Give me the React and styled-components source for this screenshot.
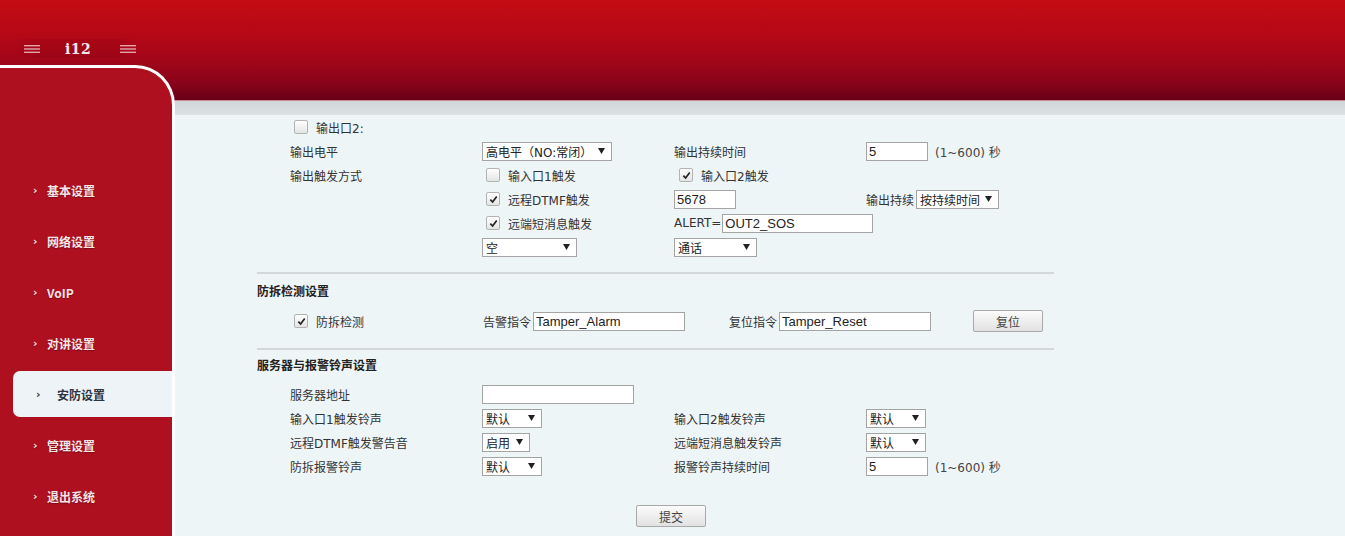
import styled, { createGlobalStyle } from 'styled-components'

const GlobalStyle = createGlobalStyle`
    html, body {
        margin: 0;
        padding: 0;
        height: 100%;
        overflow: hidden;
    }
    body {
        font-family: "DejaVu Sans", "Noto Sans CJK SC", sans-serif;
        font-size: 12px;
        color: #333;
        background: #eef5f7;
    }
`

const Page = styled.div`
    display: flex;
    flex-direction: column;
    height: 536px;
    overflow: hidden;
    background: #eef5f7;
`
const Header = styled.header`
    flex-shrink: 0;
    height: 101px;
    background: linear-gradient(#c40c13 0%, #b50817 35%, #a2061a 60%, #8a0419 82%, #680016 100%);
    border-bottom: 1px solid #c98a94;
    box-sizing: border-box;
`
const Brand = styled.div`
    display: flex;
    align-items: center;
    width: 125px;
    height: 19px;
    margin: 39px 0 0 12px;
    padding-left: 12px;
    box-sizing: border-box;
    background: linear-gradient(90deg, rgba(120, 0, 10, 0) 0%, rgba(120, 0, 10, 0.16) 15%, rgba(120, 0, 10, 0.16) 85%, rgba(120, 0, 10, 0) 100%);
`
const BrandName = styled.span`
    margin: 0 29px 0 25px;
    font-family: "DejaVu Serif", "Liberation Serif", serif;
    font-weight: bold;
    font-size: 14px;
    color: #f4e6e8;
    letter-spacing: 0.5px;
`
const Shade = styled.div`
    flex-shrink: 0;
    height: 14px;
    background: linear-gradient(#d0d6d7, #dce2e3);
`
const Body = styled.div`
    display: flex;
    flex: 1;
    min-height: 0;
`
const Sidebar = styled.nav`
    position: relative;
    z-index: 1;
    flex-shrink: 0;
    width: 172px;
    margin-top: -50px;
    margin-bottom: -100px;
    padding-top: 97px;
    background: #ae1020;
    border-top: 3px solid #fff;
    border-right: 3px solid #fff;
    border-top-right-radius: 40px;
`
const MenuItem = styled.div`
    display: flex;
    align-items: center;
    height: 51px;
    padding: ${({ $active }) => ($active ? '2px 0 3px 13px' : '0')};
    box-sizing: border-box;
`
const MenuInner = styled.div`
    display: flex;
    align-items: center;
    flex: 1;
    height: 100%;
    padding-left: ${({ $active }) => ($active ? '23px' : '33px')};
    background: ${({ $active }) => ($active ? '#eef3f8' : 'transparent')};
    border-radius: 7px 0 0 7px;
    color: ${({ $active }) => ($active ? '#2c3440' : '#f6e4e7')};
    font-family: "Noto Sans CJK SC", sans-serif;
    font-weight: bold;
    font-size: 12px;
    text-shadow: ${({ $active }) => ($active ? 'none' : '0 1px 1px rgba(80,0,10,0.5)')};
`
const Chevron = styled.span`
    width: ${({ $active }) => ($active ? '21px' : '14px')};
    font-size: 11px;
    font-family: "DejaVu Sans", sans-serif;
`
const Main = styled.main`
    flex: 1;
    padding-left: 82px;
`
const Panel = styled.div`
    width: 797px;
`
const Grid = styled.div`
    display: grid;
    grid-template-columns: ${({ $cols }) => $cols || '192px 192px 192px 192px'};
    grid-auto-rows: ${({ $row }) => $row || 24}px;
    align-items: center;
    padding-left: 33px;
`
const Cell = styled.div`
    display: flex;
    align-items: center;
    gap: ${({ $gap }) => ($gap === undefined ? 2 : $gap)}px;
    grid-column: ${({ $col, $span }) => ($col ? `${$col} / span ${$span || 1}` : 'auto')};
    padding-left: ${({ $pad }) => $pad || 0}px;
    white-space: nowrap;
`
const Rule = styled.hr`
    height: 2px;
    margin: ${({ $top }) => $top}px 0 0;
    border: none;
    background: #d3d8da;
`
const SectionTitle = styled.div`
    height: 20px;
    line-height: 20px;
    margin: ${({ $top }) => $top}px 0 ${({ $bottom }) => $bottom}px;
    font-weight: 600;
    color: #222;
`
const Box = styled.span`
    display: inline-flex;
    align-items: center;
    justify-content: center;
    width: 12px;
    height: 12px;
    margin-right: 8px;
    border: 1px solid #b3b3b3;
    border-radius: 2px;
    background: linear-gradient(#ffffff, #e4e4e4);
`
const SelectBox = styled.div`
    display: inline-flex;
    align-items: center;
    justify-content: space-between;
    width: ${({ $w }) => $w}px;
    height: 19px;
    padding: 0 6px 0 3px;
    box-sizing: border-box;
    border: 1px solid #a4a4a4;
    background: #fff;
    color: #222;
    font-size: 12px;
`
const TextInput = styled.input`
    width: ${({ $w }) => $w}px;
    height: 19px;
    padding: 0 2px;
    box-sizing: border-box;
    border: 1px solid #a4a4a4;
    background: #fff;
    color: #222;
    font-family: "Liberation Sans", "Noto Sans CJK SC", sans-serif;
    font-size: 13px;
    outline: none;
`
const Button = styled.button`
    width: 70px;
    height: 22px;
    padding: 0;
    border: 1px solid #a9a9a9;
    border-radius: 2px;
    background: linear-gradient(#fbfbfb, #e2e2e2);
    color: #444;
    font-family: "Noto Sans CJK SC", sans-serif;
    font-size: 12px;
`
const Range = styled.span`
    margin-left: 5px;
    color: #444;
`
const SubmitRow = styled.div`
    display: flex;
    justify-content: center;
    width: 768px;
    margin: 27px 0 0 30px;
`

const Burger = () => (
    <svg width="16" height="8" viewBox="0 0 16 8">
        <rect x="0" y="0" width="16" height="1.4" fill="#e7a4ac" />
        <rect x="0" y="3.3" width="16" height="1.4" fill="#e7a4ac" />
        <rect x="0" y="6.6" width="16" height="1.4" fill="#e7a4ac" />
    </svg>
)

const Check = ({ checked, children }) => (
    <>
        <Box>
            {checked && (
                <svg width="9" height="9" viewBox="0 0 10 10">
                    <path d="M1.5 5.2 L4 7.8 L8.6 1.6" fill="none" stroke="#222" strokeWidth="1.9" />
                </svg>
            )}
        </Box>
        {children}
    </>
)

const Select = ({ w, children }) => (
    <SelectBox $w={w}>
        <span>{children}</span>
        <svg width="7" height="6" viewBox="0 0 7 6">
            <polygon points="0,0 7,0 3.5,6" fill="#222" />
        </svg>
    </SelectBox>
)

const menu = ['基本设置', '网络设置', 'VoIP', '对讲设置', '安防设置', '管理设置', '退出系统']

const App = () => (
    <Page>
        <GlobalStyle />
        <Header>
            <Brand>
                <Burger />
                <BrandName>i12</BrandName>
                <Burger />
            </Brand>
        </Header>
        <Shade />
        <Body>
            <Sidebar>
                {menu.map((m) => {
                    const active = m === '安防设置'
                    return (
                        <MenuItem key={m} $active={active}>
                            <MenuInner $active={active}>
                                <Chevron $active={active}>›</Chevron>
                                {m}
                            </MenuInner>
                        </MenuItem>
                    )
                })}
            </Sidebar>
            <Main>
                <Panel>
                    <Grid>
                        <Cell $col={1} $span={2} $pad={4} $gap={0}>
                            <Check>输出口2:</Check>
                        </Cell>
                        <Cell $col={1}>输出电平</Cell>
                        <Cell><Select w={130}>高电平（NO:常闭）</Select></Cell>
                        <Cell>输出持续时间</Cell>
                        <Cell><TextInput $w={62} defaultValue="5" /><Range>(1~600) 秒</Range></Cell>
                        <Cell $col={1}>输出触发方式</Cell>
                        <Cell $pad={4} $gap={0}><Check>输入口1触发</Check></Cell>
                        <Cell $pad={5} $gap={0}><Check checked>输入口2触发</Check></Cell>
                        <Cell $col={2} $pad={4} $gap={0}><Check checked>远程DTMF触发</Check></Cell>
                        <Cell><TextInput $w={62} defaultValue="5678" /></Cell>
                        <Cell>输出持续<Select w={83}>按持续时间</Select></Cell>
                        <Cell $col={2} $pad={4} $gap={0}><Check checked>远端短消息触发</Check></Cell>
                        <Cell $span={2} $col={3} $gap={1}>ALERT=<TextInput $w={151} defaultValue="OUT2_SOS" /></Cell>
                        <Cell $col={2}><Select w={95}>空</Select></Cell>
                        <Cell><Select w={83}>通话</Select></Cell>
                    </Grid>

                    <Rule $top={13} />
                    <SectionTitle $top={8} $bottom={5}>防拆检测设置</SectionTitle>
                    <Grid $cols="192px 247px 244px auto" $row={28}>
                        <Cell $pad={4} $gap={0}><Check checked>防拆检测</Check></Cell>
                        <Cell $pad={1}>告警指令<TextInput $w={152} defaultValue="Tamper_Alarm" /></Cell>
                        <Cell>复位指令<TextInput $w={152} defaultValue="Tamper_Reset" /></Cell>
                        <Cell><Button>复位</Button></Cell>
                    </Grid>

                    <Rule $top={13} />
                    <SectionTitle $top={6} $bottom={6}>服务器与报警铃声设置</SectionTitle>
                    <Grid>
                        <Cell $col={1}>服务器地址</Cell>
                        <Cell $span={2} $col={2}><TextInput $w={152} /></Cell>
                        <Cell $col={1}>输入口1触发铃声</Cell>
                        <Cell><Select w={60}>默认</Select></Cell>
                        <Cell>输入口2触发铃声</Cell>
                        <Cell><Select w={60}>默认</Select></Cell>
                        <Cell $col={1}>远程DTMF触发警告音</Cell>
                        <Cell><Select w={48}>启用</Select></Cell>
                        <Cell>远端短消息触发铃声</Cell>
                        <Cell><Select w={60}>默认</Select></Cell>
                        <Cell $col={1}>防拆报警铃声</Cell>
                        <Cell><Select w={60}>默认</Select></Cell>
                        <Cell>报警铃声持续时间</Cell>
                        <Cell><TextInput $w={62} defaultValue="5" /><Range>(1~600) 秒</Range></Cell>
                    </Grid>
                    <SubmitRow>
                        <Button>提交</Button>
                    </SubmitRow>
                </Panel>
            </Main>
        </Body>
    </Page>
)

export default App
